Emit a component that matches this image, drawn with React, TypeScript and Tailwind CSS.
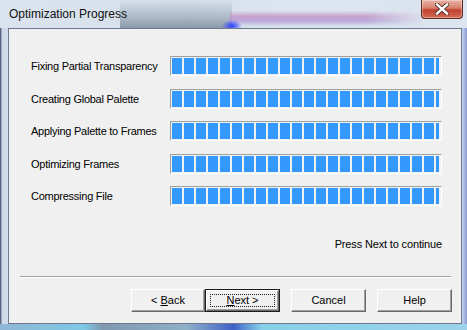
const steps = [
  "Fixing Partial Transparency",
  "Creating Global Palette",
  "Applying Palette to Frames",
  "Optimizing Frames",
  "Compressing File",
];

function ProgressBar() {
  return (
    <div className="w-[272px] h-[20px] border border-t-[#a0a0a0] border-l-[#a0a0a0] border-b-white border-r-white pl-[1px] pr-[2px] py-[1px]">
      <div className="flex gap-[2px] h-full overflow-hidden">
        {Array.from({ length: 23 }).map((_, i) => (
          <div key={i} className="w-[10px] h-full shrink-0 bg-[#3399ff]" />
        ))}
      </div>
    </div>
  );
}

function Button({
  children,
  isDefault,
  className = "",
}: {
  children: React.ReactNode;
  isDefault?: boolean;
  className?: string;
}) {
  if (isDefault) {
    return (
      <div className={`h-[23px] border border-[#1e1e1e] ${className}`}>
        <div className="relative h-full border border-t-white border-l-white border-b-[#696969] border-r-[#696969] shadow-[inset_-1px_-1px_0_#a0a0a0] flex items-center justify-center">
          <div className="absolute inset-[3px] border border-dotted border-[#222]" />
          {children}
        </div>
      </div>
    );
  }
  return (
    <div
      className={`h-[23px] border border-t-white border-l-white border-b-[#696969] border-r-[#696969] shadow-[inset_-1px_-1px_0_#a0a0a0] flex items-center justify-center ${className}`}
    >
      {children}
    </div>
  );
}

export default function App() {
  return (
    <div className="w-[467px] h-[330px] flex flex-col overflow-hidden bg-[linear-gradient(180deg,#cdd9e7_0%,#c3d1e2_60%,#9fc6e0_100%)] font-['Liberation_Sans',Arial,sans-serif] text-[11px] text-black">
      {/* title bar, glass with the desktop showing through */}
      <div className="relative h-[28px] shrink-0 [background:radial-gradient(ellipse_10px_6px_at_232px_26px,#2a3cff,rgba(60,80,255,0.6)_50%,rgba(60,80,255,0)),linear-gradient(90deg,rgba(219,228,238,0)_0%,rgba(219,228,238,0)_70%,rgba(219,228,238,1)_100%)_230px_0/195px_28px_no-repeat,linear-gradient(180deg,rgba(200,160,205,0)_0%,rgba(200,160,205,0)_38%,rgba(196,150,200,0.85)_58%,rgba(175,150,212,0.75)_75%,rgba(205,205,228,0.3)_92%,rgba(215,222,236,0.2)_100%)_230px_0/195px_28px_no-repeat,linear-gradient(180deg,rgba(150,165,180,0)_0%,rgba(140,155,172,0.55)_60%,rgba(120,135,155,0.8)_100%)_120px_0/112px_28px_no-repeat,linear-gradient(90deg,#dbe4ee,#d5dfea_40%,#dce4ef_60%,#dbe4ef)]">
        <span className="absolute left-[9px] top-[7px] text-[12px] leading-[15px] text-[#111]">
          Optimization Progress
        </span>
        <div className="absolute left-[421px] top-0 w-[42px] h-[19px] rounded-b-[4px] border border-t-0 border-[#5e2a24] bg-[linear-gradient(180deg,#e9b2a4_0%,#d9806e_45%,#c1402f_55%,#d26a52_100%)] shadow-[inset_0_0_0_1px_rgba(255,255,255,0.35)] flex items-center justify-center">
          <svg width="14" height="12" viewBox="0 0 14 12">
            <path d="M2 1.5 L12 10.5 M12 1.5 L2 10.5" stroke="#4a2a2a" strokeWidth="4.2" strokeLinecap="square" />
            <path d="M2 1.5 L12 10.5 M12 1.5 L2 10.5" stroke="#fff" strokeWidth="2.4" strokeLinecap="square" />
          </svg>
        </div>
      </div>

      <div className="flex flex-1 min-h-0">
        <div className="w-[8px] shrink-0 bg-[linear-gradient(90deg,#47506a_0px,#6b7896_1px,#cdd8e6_2px,#d2dcea_100%)]" />
        {/* client area */}
        <div className="w-[454px] shrink-0 border border-[#6c7a8c] bg-[#f0f0f0] flex flex-col">
          <div className="flex flex-col gap-[12.5px] pt-[27px] pl-[22px]">
            {steps.map((s) => (
              <div key={s} className="flex items-center h-[20px]">
                <span className="w-[139px] shrink-0 tracking-[-0.25px] leading-[13px] pt-[1px]">{s}</span>
                <ProgressBar />
              </div>
            ))}
          </div>

          <div className="flex justify-end pr-[19px] mt-[32px] leading-[13px] tracking-[-0.15px]">
            Press Next to continue
          </div>

          <div className="mt-[25px] ml-[11px] mr-[10px] h-[2px] border-t border-t-[#a0a0a0] border-b border-b-white" />

          <div className="flex justify-end pr-[9px] mt-[11px]">
            <Button className="w-[74px]">
              <span>
                &lt; <span className="underline underline-offset-[1px]">B</span>ack
              </span>
            </Button>
            <Button isDefault className="w-[75px]">
              <span>
                <span className="underline underline-offset-[1px]">N</span>ext &gt;
              </span>
            </Button>
            <Button className="w-[75px] ml-[11px]">Cancel</Button>
            <Button className="w-[75px] ml-[11px]">Help</Button>
          </div>
        </div>
        <div className="flex-1 bg-[linear-gradient(90deg,#c6d2ee,#8a9ad0)]" />
      </div>

      <div className="h-[6px] shrink-0 bg-[linear-gradient(90deg,#8fb6d4_0%,#7ec9e6_18%,#7f98b0_22%,#8fb0c8_40%,#4060c8_50%,#86d0ea_56%,#9cd2ea_100%)]" />
    </div>
  );
}
